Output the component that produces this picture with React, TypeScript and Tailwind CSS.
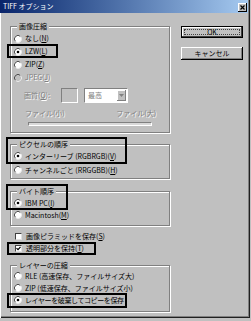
import type { ReactNode } from 'react';

const off = 'text-[#808080] [text-shadow:1px_1px_0_#fff]';

function Radio({ on, dim }: { on?: boolean; dim?: boolean }) {
  return (
    <svg width="8" height="8" viewBox="0 0 8 8" className="shrink-0">
      <circle cx="4" cy="4" r="3.5" fill={dim ? '#c0c0c0' : '#fff'} />
      <path d="M1.5 6.5 A3.5 3.5 0 0 1 6.5 1.5" fill="none" stroke="#505050" strokeWidth="1" />
      <path d="M6.5 1.5 A3.5 3.5 0 0 1 1.5 6.5" fill="none" stroke="#e8e8e8" strokeWidth="1" />
      {on && <circle cx="4" cy="4" r="1.3" fill="#000" />}
    </svg>
  );
}

function Check({ on }: { on?: boolean }) {
  return (
    <span className="flex h-[7px] w-[7px] shrink-0 items-center justify-center border border-t-[#404040] border-l-[#404040] border-r-[#e0e0e0] border-b-[#e0e0e0] bg-white">
      {on && (
        <svg width="5" height="5" viewBox="0 0 5 5">
          <path d="M0.5 2.2 L2 3.7 L4.5 0.8" fill="none" stroke="#000" strokeWidth="1.2" />
        </svg>
      )}
    </span>
  );
}

function Group({ title, className, children }: { title: string; className: string; children: ReactNode }) {
  return (
    <div className={`relative flex flex-col border border-[#808080] shadow-[inset_1px_1px_0_#fff,1px_1px_0_#fff] ${className}`}>
      <span className="-mt-[5px] ml-[6px] self-start bg-[#c0c0c0] px-[2px] leading-[8px]">{title}</span>
      {children}
    </div>
  );
}

function Opt({ children, on, dim, h }: { children: ReactNode; on?: boolean; dim?: boolean; h: string }) {
  return (
    <div className={`relative flex items-center gap-[3px] pl-[3px] ${h}`}>
      <Radio on={on} dim={dim} />
      <span className={dim ? off : ''}>{children}</span>
    </div>
  );
}

export default function App() {
  return (
    <div className="h-[321px] w-[251px] overflow-hidden bg-[#c0c0c0] font-['Noto_Sans_CJK_JP',sans-serif] text-[7px] leading-none text-black">
      <div className="flex h-[318px] w-[250px] flex-col shadow-[inset_-1px_-1px_0_#202020,inset_-2px_-2px_0_#808080]">
        {/* title bar */}
        <div className="flex h-[13px] w-[248px] items-start justify-between bg-gradient-to-r from-[#0a246a] to-[#a6caf0] pl-[3px] pr-[1px]">
          <span className="mt-[3px] text-white">TIFF オプション</span>
          <span className="mt-[3px] flex h-[9px] w-[9px] items-center justify-center bg-[#c0c0c0] shadow-[inset_-1px_-1px_0_#000,inset_1px_1px_0_#fff]">
            <svg width="5" height="5" viewBox="0 0 5 5">
              <path d="M0.5 0.5 L4.5 4.5 M4.5 0.5 L0.5 4.5" stroke="#000" strokeWidth="1.2" />
            </svg>
          </span>
        </div>

        <div className="flex flex-1 border-l border-white">
          {/* left column */}
          <div className="flex w-[169px] flex-col pl-[9px]">
            <Group title="画像圧縮" className="mt-[13px] h-[107px]">
              <Opt h="mt-[2px] h-[13px]">なし(<u>N</u>)</Opt>
              <Opt h="h-[13px]" on>
                LZW(<u>L</u>)
                <span className="pointer-events-none absolute left-[-4px] top-[-1px] h-[14px] w-[51px] border-2 border-black" />
              </Opt>
              <Opt h="h-[13px]">ZIP(<u>Z</u>)</Opt>
              <Opt h="h-[13px]" dim>JPEG(<u>J</u>)</Opt>
              <div className="mt-[4px] flex h-[15px] items-center pl-[13px]">
                <span className={`w-[37px] ${off}`}>画質(<u>Q</u>):</span>
                <span className="h-[15px] w-[17px] border border-t-[#808080] border-l-[#808080] border-r-white border-b-white bg-[#c0c0c0]" />
                <span className="ml-[6px] flex h-[15px] w-[44px] items-center border border-t-[#808080] border-l-[#808080] border-r-white border-b-white bg-white">
                  <span className={`flex-1 pl-[3px] ${off}`}>最高</span>
                  <span className="mr-[1px] flex h-[11px] w-[9px] items-center justify-center bg-[#c0c0c0] shadow-[inset_-1px_-1px_0_#808080,inset_1px_1px_0_#fff]">
                    <svg width="5" height="3" viewBox="0 0 5 3">
                      <path d="M0 0 H5 L2.5 3 Z" fill="#808080" />
                    </svg>
                  </span>
                </span>
              </div>
              <div className={`mt-[5px] flex h-[10px] items-center justify-between pl-[14px] pr-[13px] ${off}`}>
                <span>ファイル(小)</span>
                <span>ファイル(大)</span>
              </div>
              <div className="ml-[17px] mt-[4px] h-[4px] w-[124px] border border-t-[#808080] border-l-[#808080] border-r-white border-b-white bg-[#d8d8d8]" />
            </Group>

            <Group title="ピクセルの順序" className="mt-[11px] h-[35px]">
              <span className="pointer-events-none absolute left-[-5px] top-[-8px] h-[27px] w-[121px] border-2 border-black" />
              <Opt h="mt-[1px] h-[14px]" on>インターリーブ (RGBRGB)(<u>V</u>)</Opt>
              <Opt h="h-[14px]">チャンネルごと (RRGGBB)(<u>H</u>)</Opt>
            </Group>

            <Group title="バイト順序" className="mt-[12px] h-[35px]">
              <span className="pointer-events-none absolute left-[-5px] top-[-8px] h-[26px] w-[62px] border-2 border-black" />
              <Opt h="mt-[2px] h-[12px]" on>IBM PC(<u>I</u>)</Opt>
              <Opt h="h-[12px]">Macintosh(<u>M</u>)</Opt>
            </Group>

            <div className="mt-[4px] flex h-[12px] items-center gap-[4px] pl-[5px]">
              <Check />
              <span>画像ピラミッドを保存(<u>S</u>)</span>
            </div>
            <div className="relative flex h-[12px] items-center gap-[4px] pl-[5px]">
              <Check on />
              <span>透明部分を保持(<u>T</u>)</span>
              <span className="pointer-events-none absolute left-[-3px] top-0 h-[13px] w-[89px] border-2 border-black" />
            </div>

            <Group title="レイヤーの圧縮" className="mt-[11px] h-[47px]">
              <Opt h="mt-[1px] h-[12px]">RLE (高速保存、ファイルサイズ大)</Opt>
              <Opt h="h-[12px]">ZIP (低速保存、ファイルサイズ小)</Opt>
              <Opt h="h-[12px] tracking-[-0.4px]" on>
                レイヤーを破棄してコピーを保存
                <span className="pointer-events-none absolute left-[-4px] top-[-1px] h-[15px] w-[120px] border-2 border-black" />
              </Opt>
            </Group>
          </div>

          {/* right column */}
          <div className="ml-[11px] mt-[13px] flex w-[62px] flex-col gap-[9px]">
            <button className="relative flex h-[12px] items-center justify-center border border-black bg-[#c0c0c0] shadow-[inset_-1px_-1px_0_#404040,inset_1px_1px_0_#fff]">
              OK
              <span className="pointer-events-none absolute inset-[2px] border border-dotted border-[#404040]" />
            </button>
            <button className="flex h-[13px] items-center justify-center bg-[#c0c0c0] shadow-[inset_-1px_-1px_0_#000,inset_1px_1px_0_#fff,inset_-2px_-2px_0_#808080]">
              キャンセル
            </button>
          </div>
        </div>
      </div>
    </div>
  );
}
